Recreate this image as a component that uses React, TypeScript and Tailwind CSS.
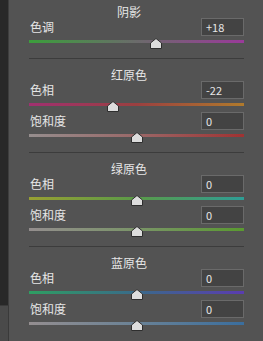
const font = { fontFamily: '"Noto Sans CJK SC", "Noto Sans", sans-serif' };

type Row = { label: string; value: string; pos: number; from: string; via: string; to: string };
type Section = { title: string; rows: Row[] };

const sections: Section[] = [
  {
    title: '阴影',
    rows: [{ label: '色调', value: '+18', pos: 0.59, from: '#3b9e3b', via: '#6b6b6b', to: '#9a3a9a' }],
  },
  {
    title: '红原色',
    rows: [
      { label: '色相', value: '-22', pos: 0.39, from: '#a03070', via: '#9a4040', to: '#b07a2c' },
      { label: '饱和度', value: '0', pos: 0.5, from: '#968e8e', via: '#9a6868', to: '#a03232' },
    ],
  },
  {
    title: '绿原色',
    rows: [
      { label: '色相', value: '0', pos: 0.5, from: '#98a032', via: '#5a9a48', to: '#2e9e96' },
      { label: '饱和度', value: '0', pos: 0.5, from: '#948e8e', via: '#7a9468', to: '#5a9a30' },
    ],
  },
  {
    title: '蓝原色',
    rows: [
      { label: '色相', value: '0', pos: 0.5, from: '#2e9e62', via: '#3a6a8a', to: '#5a3cb0' },
      { label: '饱和度', value: '0', pos: 0.5, from: '#948e90', via: '#6a8296', to: '#3a6e9e' },
    ],
  },
];

function Thumb({ pos }: { pos: number }) {
  return (
    <svg
      className="absolute top-[-2px]"
      style={{ left: pos * 215 - 6 }}
      width="12"
      height="11"
      viewBox="0 0 12 11"
    >
      <path d="M6 0.5 L11.5 5 L11.5 10.5 L0.5 10.5 L0.5 5 Z" fill="#dcdcdc" stroke="#2e2e2e" strokeWidth="1" />
    </svg>
  );
}

function Slider({ row, first }: { row: Row; first: boolean }) {
  return (
    <div className={first ? '' : 'mt-[6px]'}>
      <div className="flex items-center justify-between h-[18px] pl-[1px]">
        <span className="text-[12px] leading-[14px] text-[#e6e6e6]">{row.label}</span>
        <div className="w-[43px] h-[18px] border border-[#6a6a6a] bg-[#434343] text-[#e6e6e6] text-[11px] leading-[16px] pl-[4px]">
          {row.value}
        </div>
      </div>
      <div className="relative mt-[4px] h-[3px] w-[215px]">
        <div
          className="h-[3px] w-full"
          style={{ background: `linear-gradient(to right, ${row.from}, ${row.via}, ${row.to})` }}
        />
        <Thumb pos={row.pos} />
      </div>
    </div>
  );
}

export default function App() {
  return (
    <div className="flex w-[263px] h-[341px] bg-[#535353] overflow-hidden" style={font}>
      <div className="flex flex-col w-[9px] shrink-0">
        <div className="h-[305px] bg-[#282828] border-r border-[#3e3e3e]" />
        <div className="flex-1 bg-[#4a4a4a] border-t border-r border-[#3a3a3a]" />
      </div>
      <div className="flex flex-col pl-[20px] pt-[6px] w-[235px]">
        {sections.map((s, i) => (
          <div key={s.title} className="flex flex-col">
            {i > 0 && <div className="h-[1px] bg-[#3c3c3c] mt-[15px] mb-[10px]" />}
            <div className="w-[200px] text-center text-[12px] leading-[12px] text-[#e6e6e6]">{s.title}</div>
            {s.rows.map((r, j) => (
              <Slider key={r.label + j} row={r} first={j === 0} />
            ))}
          </div>
        ))}
      </div>
    </div>
  );
}
